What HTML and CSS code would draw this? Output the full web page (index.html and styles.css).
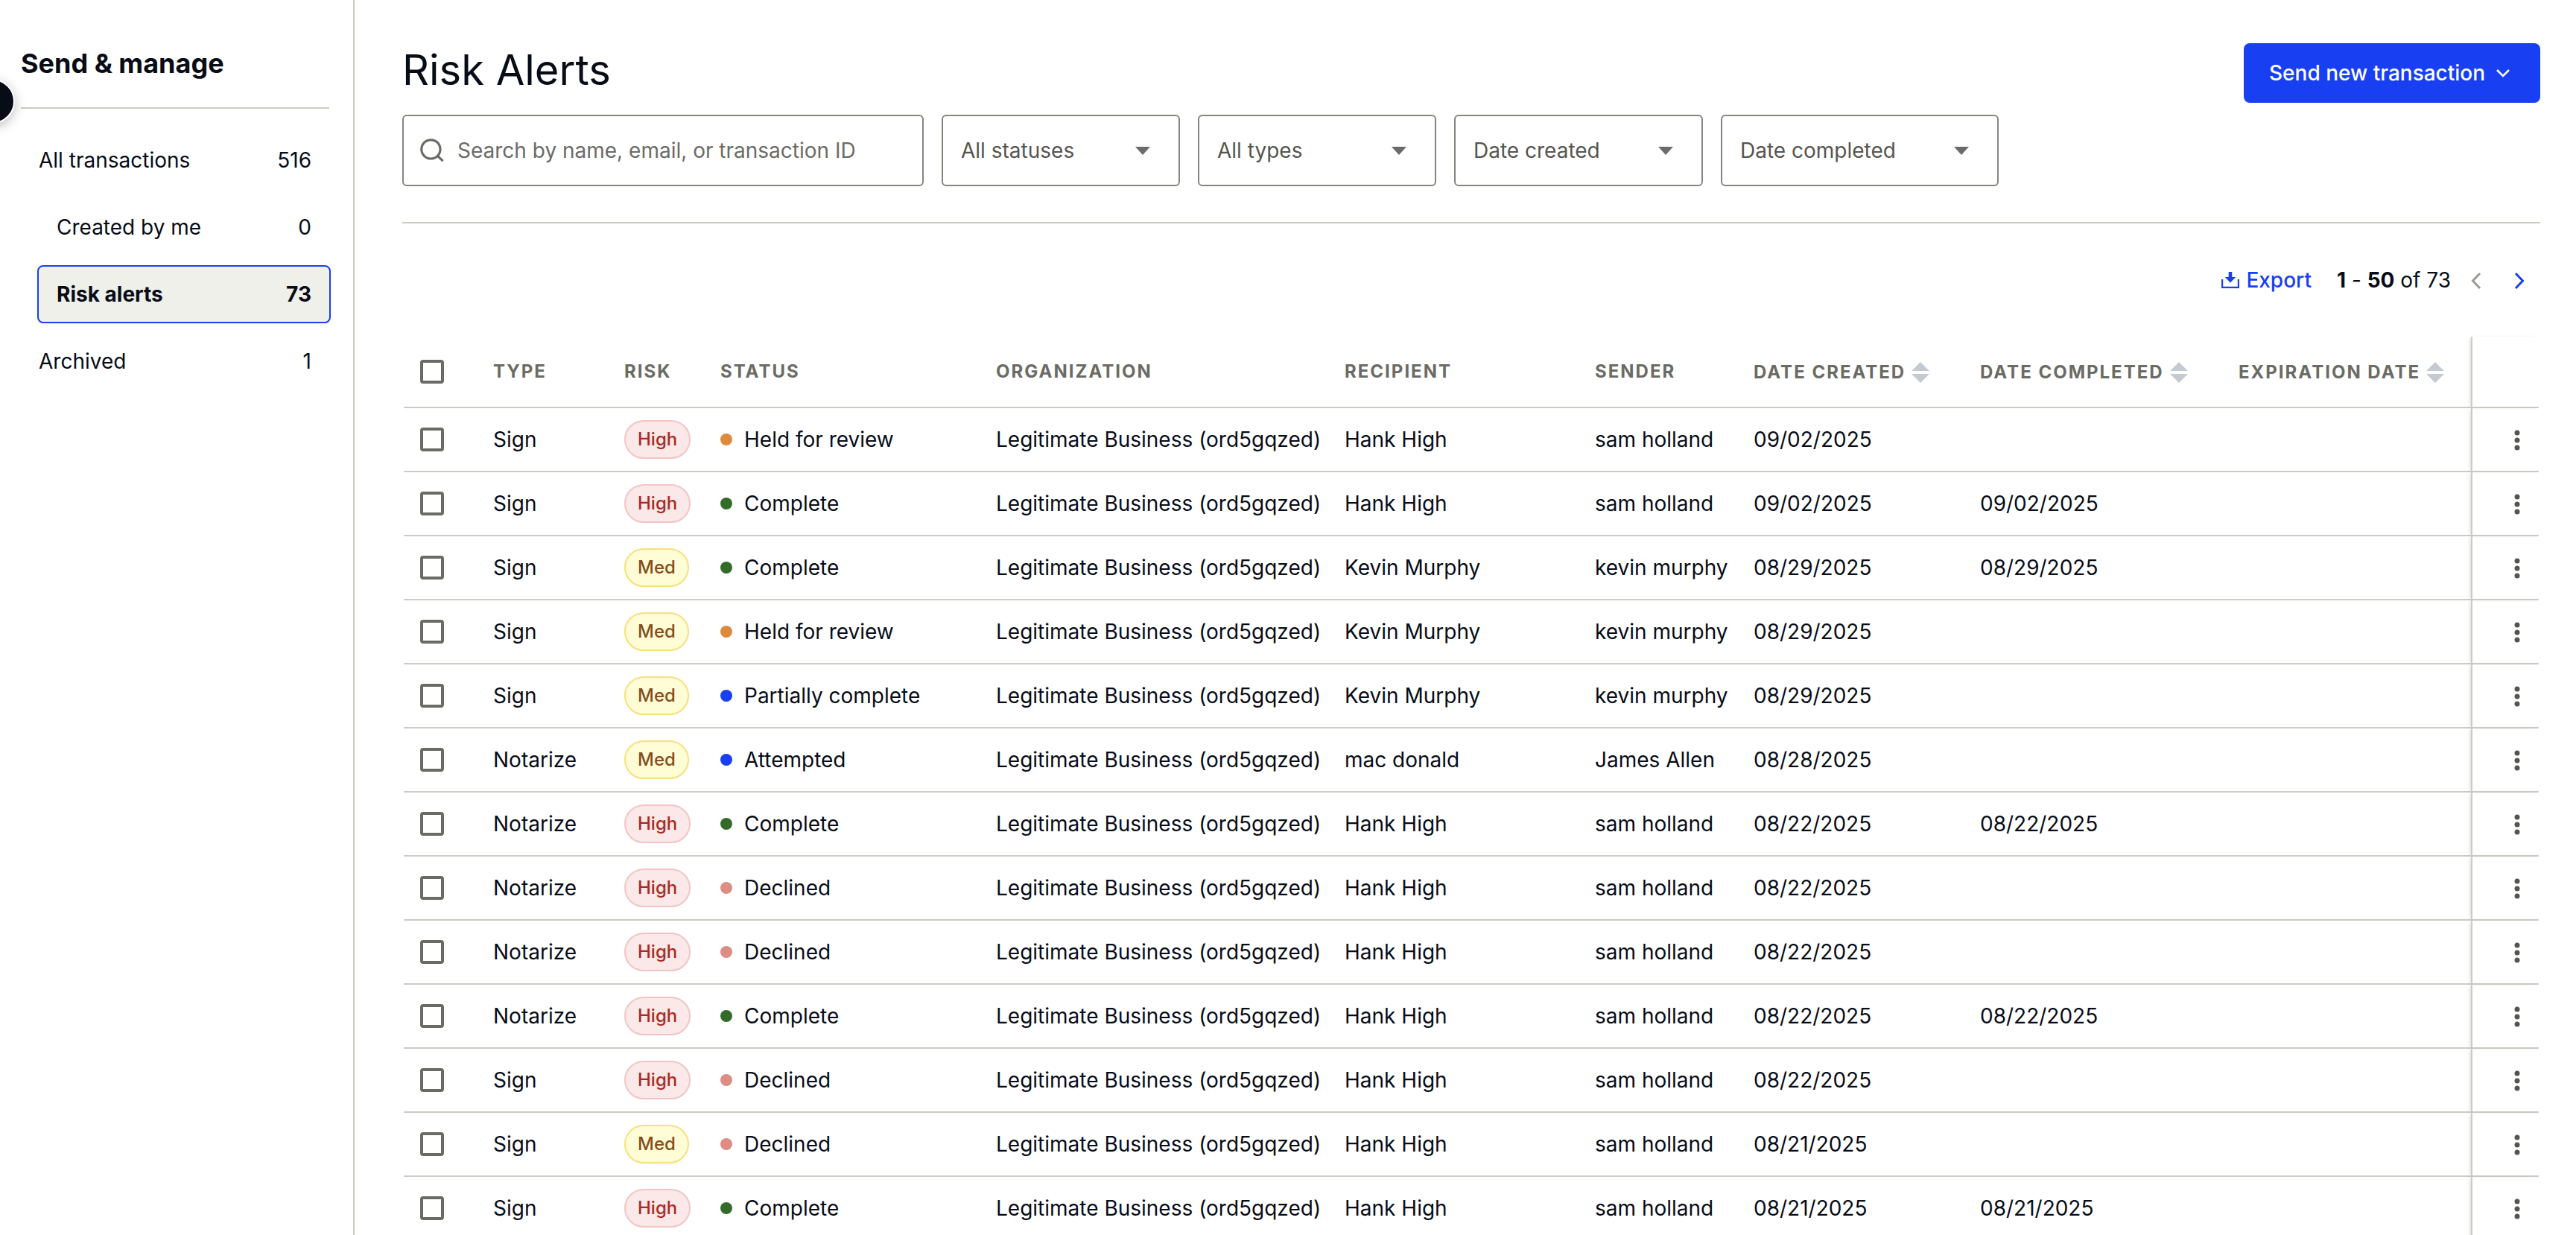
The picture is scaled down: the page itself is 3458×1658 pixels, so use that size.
FILE: index.html
```html
<!DOCTYPE html>
<html lang="en">
<head>
<meta charset="utf-8">
<title>Risk Alerts</title>
<link rel="stylesheet" href="styles.css">
</head>
<body>
<svg class="sprite" width="0" height="0">
  <symbol id="sort" viewBox="0 0 24 28"><path d="M12 0L24 12H0zM0 16H24L12 28z" fill="#c3cad2"/></symbol>
  <symbol id="more" viewBox="0 0 8 28"><g fill="#555550"><circle cx="4" cy="4" r="3.5"/><circle cx="4" cy="14" r="3.5"/><circle cx="4" cy="24" r="3.5"/></g></symbol>
  <symbol id="caret" viewBox="0 0 20 11"><path d="M0 0H20L10 11z" fill="#6b6b6b"/></symbol>
</svg>
<div class="app">
  <aside class="sidebar">
    <span class="collapse"></span>
    <h2 class="side-title">Send &amp; manage</h2>
    <nav class="nav">
      <a class="nav-item"><span>All transactions</span><span>516</span></a>
      <a class="nav-item nested"><span>Created by me</span><span>0</span></a>
      <a class="nav-item nested active"><span>Risk alerts</span><span>73</span></a>
      <a class="nav-item"><span>Archived</span><span>1</span></a>
    </nav>
  </aside>
  <main class="main">
    <header class="head">
      <div>
        <h1 class="title">Risk Alerts</h1>
        <div class="filters">
          <div class="field search">
            <svg width="32" height="32" viewBox="0 0 32 32" fill="none" stroke="#6b6b66" stroke-width="3.2"><circle cx="14.4" cy="14.4" r="12.6"/><path d="M23.2 23.2L30.600 30.200"/></svg>
            <span>Search by name, email, or transaction ID</span>
          </div>
          <div class="field select w-320"><span>All statuses</span><svg width="20" height="11"><use href="#caret"/></svg></div>
          <div class="field select w-320"><span>All types</span><svg width="20" height="11"><use href="#caret"/></svg></div>
          <div class="field select w-334"><span>Date created</span><svg width="20" height="11"><use href="#caret"/></svg></div>
          <div class="field select w-373"><span>Date completed</span><svg width="20" height="11"><use href="#caret"/></svg></div>
        </div>
      </div>
      <button class="send"><span>Send new transaction</span><svg width="18" height="11" viewBox="0 0 18 11" fill="none" stroke="#fff" stroke-width="2.5"><path d="M1 1L9 9L17 1"/></svg></button>
    </header>
    <div class="toolbar">
      <a class="export"><svg width="24" height="22" viewBox="0 0 24 22"><path d="M9.700 0h4.600v7h4.900L12 14.600L4.800 7h4.900z" fill="#1840f2"/><path d="M1.100 10V20.900H22.900V10" fill="none" stroke="#1840f2" stroke-width="2.200"/></svg><span>Export</span></a>
      <span class="range"><b>1</b> - <b>50</b> of 73</span>
      <svg class="prev" width="14" height="22" viewBox="0 0 14 22" fill="none" stroke="#9b9b95" stroke-width="3"><path d="M12 1L2.500 11L12 21"/></svg>
      <svg class="next" width="14" height="22" viewBox="0 0 14 22" fill="none" stroke="#1840f2" stroke-width="3"><path d="M2 1L11.500 11L2 21"/></svg>
    </div>
    <table class="grid">
      <colgroup><col class="c-check"><col class="c-type"><col class="c-risk"><col class="c-status"><col class="c-org"><col class="c-rec"><col class="c-send"><col class="c-created"><col class="c-done"><col class="c-exp"><col class="c-act"></colgroup>
      <thead><tr><th class="check"><i class="box"></i></th><th>Type</th><th>Risk</th><th>Status</th><th>Organization</th><th>Recipient</th><th>Sender</th>
        <th><span class="sortable">Date created<svg width="24" height="28"><use href="#sort"/></svg></span></th>
        <th><span class="sortable">Date completed<svg width="24" height="28"><use href="#sort"/></svg></span></th>
        <th><span class="sortable">Expiration date<svg width="24" height="28"><use href="#sort"/></svg></span></th><th class="act"></th></tr></thead>
      <tbody>
        <tr><td class="check"><i class="box"></i></td><td>Sign</td><td><span class="badge high">High</span></td><td><span class="status held">Held for review</span></td><td>Legitimate Business (ord5gqzed)</td><td>Hank High</td><td>sam holland</td><td>09/02/2025</td><td></td><td></td><td class="act"><svg width="8" height="28"><use href="#more"/></svg></td></tr>
        <tr><td class="check"><i class="box"></i></td><td>Sign</td><td><span class="badge high">High</span></td><td><span class="status complete">Complete</span></td><td>Legitimate Business (ord5gqzed)</td><td>Hank High</td><td>sam holland</td><td>09/02/2025</td><td>09/02/2025</td><td></td><td class="act"><svg width="8" height="28"><use href="#more"/></svg></td></tr>
        <tr><td class="check"><i class="box"></i></td><td>Sign</td><td><span class="badge med">Med</span></td><td><span class="status complete">Complete</span></td><td>Legitimate Business (ord5gqzed)</td><td>Kevin Murphy</td><td>kevin murphy</td><td>08/29/2025</td><td>08/29/2025</td><td></td><td class="act"><svg width="8" height="28"><use href="#more"/></svg></td></tr>
        <tr><td class="check"><i class="box"></i></td><td>Sign</td><td><span class="badge med">Med</span></td><td><span class="status held">Held for review</span></td><td>Legitimate Business (ord5gqzed)</td><td>Kevin Murphy</td><td>kevin murphy</td><td>08/29/2025</td><td></td><td></td><td class="act"><svg width="8" height="28"><use href="#more"/></svg></td></tr>
        <tr><td class="check"><i class="box"></i></td><td>Sign</td><td><span class="badge med">Med</span></td><td><span class="status open">Partially complete</span></td><td>Legitimate Business (ord5gqzed)</td><td>Kevin Murphy</td><td>kevin murphy</td><td>08/29/2025</td><td></td><td></td><td class="act"><svg width="8" height="28"><use href="#more"/></svg></td></tr>
        <tr><td class="check"><i class="box"></i></td><td>Notarize</td><td><span class="badge med">Med</span></td><td><span class="status open">Attempted</span></td><td>Legitimate Business (ord5gqzed)</td><td>mac donald</td><td>James Allen</td><td>08/28/2025</td><td></td><td></td><td class="act"><svg width="8" height="28"><use href="#more"/></svg></td></tr>
        <tr><td class="check"><i class="box"></i></td><td>Notarize</td><td><span class="badge high">High</span></td><td><span class="status complete">Complete</span></td><td>Legitimate Business (ord5gqzed)</td><td>Hank High</td><td>sam holland</td><td>08/22/2025</td><td>08/22/2025</td><td></td><td class="act"><svg width="8" height="28"><use href="#more"/></svg></td></tr>
        <tr><td class="check"><i class="box"></i></td><td>Notarize</td><td><span class="badge high">High</span></td><td><span class="status declined">Declined</span></td><td>Legitimate Business (ord5gqzed)</td><td>Hank High</td><td>sam holland</td><td>08/22/2025</td><td></td><td></td><td class="act"><svg width="8" height="28"><use href="#more"/></svg></td></tr>
        <tr><td class="check"><i class="box"></i></td><td>Notarize</td><td><span class="badge high">High</span></td><td><span class="status declined">Declined</span></td><td>Legitimate Business (ord5gqzed)</td><td>Hank High</td><td>sam holland</td><td>08/22/2025</td><td></td><td></td><td class="act"><svg width="8" height="28"><use href="#more"/></svg></td></tr>
        <tr><td class="check"><i class="box"></i></td><td>Notarize</td><td><span class="badge high">High</span></td><td><span class="status complete">Complete</span></td><td>Legitimate Business (ord5gqzed)</td><td>Hank High</td><td>sam holland</td><td>08/22/2025</td><td>08/22/2025</td><td></td><td class="act"><svg width="8" height="28"><use href="#more"/></svg></td></tr>
        <tr><td class="check"><i class="box"></i></td><td>Sign</td><td><span class="badge high">High</span></td><td><span class="status declined">Declined</span></td><td>Legitimate Business (ord5gqzed)</td><td>Hank High</td><td>sam holland</td><td>08/22/2025</td><td></td><td></td><td class="act"><svg width="8" height="28"><use href="#more"/></svg></td></tr>
        <tr><td class="check"><i class="box"></i></td><td>Sign</td><td><span class="badge med">Med</span></td><td><span class="status declined">Declined</span></td><td>Legitimate Business (ord5gqzed)</td><td>Hank High</td><td>sam holland</td><td>08/21/2025</td><td></td><td></td><td class="act"><svg width="8" height="28"><use href="#more"/></svg></td></tr>
        <tr><td class="check"><i class="box"></i></td><td>Sign</td><td><span class="badge high">High</span></td><td><span class="status complete">Complete</span></td><td>Legitimate Business (ord5gqzed)</td><td>Hank High</td><td>sam holland</td><td>08/21/2025</td><td>08/21/2025</td><td></td><td class="act"><svg width="8" height="28"><use href="#more"/></svg></td></tr>
      </tbody>
    </table>
  </main>
</div>
</body>
</html>
```
FILE: styles.css
```css
* { box-sizing: border-box; }
html, body { margin: 0; height: 100%; overflow: hidden; }
body {
  background: #fff;
  color: #080c17;
  font: 400 28px/44px Inter, "Liberation Sans", sans-serif;
}
svg { display: block; flex: none; }
.sprite { position: absolute; }
.app { display: flex; height: 1658px; }

.sidebar {
  position: relative;
  flex: none;
  width: 476px;
  border-right: 2px solid #cbccc5;
  padding: 60px 32px 0 28px;
}
.collapse {
  position: absolute;
  left: -40px;
  top: 106px;
  width: 60px;
  height: 60px;
  border: 2px solid #fff;
  border-radius: 50%;
  background: #080c17;
  box-shadow: 0 4px 16px rgba(0, 0, 0, .25);
}
.side-title {
  margin: 0;
  height: 86px;
  border-bottom: 2px solid #cbccc5;
  font-size: 36px;
  line-height: 50px;
  font-weight: 700;
}
.nav {
  display: flex;
  flex-direction: column;
  gap: 12px;
  padding-top: 30px;
  margin: 0 -2px 0 22px;
}
.nav-item {
  display: flex;
  justify-content: space-between;
  align-items: center;
  height: 78px;
  padding: 0 24px 0 0;
  border: 2px solid transparent;
  border-radius: 8px;
}
.nested { padding-left: 24px; }
.active { background: #eff0ea; border-color: #1840f2; font-weight: 700; }

.main { flex: 1; min-width: 0; padding: 58px 48px 0 64px; }
.head {
  display: flex;
  justify-content: space-between;
  align-items: flex-start;
  height: 242px;
  border-bottom: 2px solid #cbccc5;
}
.title { margin: 0; font-size: 56px; line-height: 72px; font-weight: 400; height: 96px; }
.filters { display: flex; gap: 24px; }
.field {
  display: flex;
  align-items: center;
  height: 96px;
  border: 2px solid #85867e;
  border-radius: 6px;
  color: #555550;
}
.search { width: 700px; padding-left: 22px; gap: 18px; color: #6b6b66; }
.select { justify-content: space-between; padding: 0 38px 0 24px; }
.w-320 { width: 320px; }
.w-334 { width: 334px; }
.w-373 { width: 373px; }
.send {
  display: flex;
  align-items: center;
  gap: 15px;
  width: 398px;
  height: 80px;
  padding: 0 0 0 34px;
  border: 0;
  border-radius: 8px;
  background: #1840f2;
  color: #fff;
  font: 500 28px/44px Inter, "Liberation Sans", sans-serif;
}
.toolbar {
  display: flex;
  justify-content: flex-end;
  align-items: center;
  height: 152px;
  padding: 0 21px 0 0;
}
.export { display: flex; align-items: center; gap: 9px; color: #1840f2; font-weight: 500; margin-right: 34px; }
.range { margin-right: 27px; }
.prev { margin-right: 44px; }
.prev, .next { margin-top: 2px; }

.grid {
  table-layout: fixed;
  border-collapse: separate;
  border-spacing: 0;
  width: 2866px;
  margin-left: 2px;
}
.c-check { width: 120px; }
.c-type { width: 176px; }
.c-risk { width: 129px; }
.c-status { width: 370px; }
.c-org { width: 468px; }
.c-rec { width: 336px; }
.c-send { width: 213px; }
.c-created { width: 304px; }
.c-done { width: 347px; }
.c-exp { width: 312px; }
.c-act { width: 91px; }
.grid th, .grid td {
  padding: 0;
  text-align: left;
  vertical-align: middle;
  white-space: nowrap;
  border-bottom: 2px solid #cbccc5;
}
.grid th {
  height: 96px;
  color: #6b6b64;
  font-size: 24px;
  line-height: 32px;
  font-weight: 700;
  letter-spacing: 2px;
  text-transform: uppercase;
}
.grid td { height: 86px; }
.grid .check { padding-left: 22px; }
.grid .act {
  border-left: 2px solid #cbccc5;
  padding: 2px 0 0 56px;
  box-shadow: -3px 0 4px -2px rgba(100, 100, 80, .25);
}
.box {
  display: block;
  width: 32px;
  height: 32px;
  border: 4px solid #6b6b66;
  border-radius: 4px;
}
.sortable { display: flex; align-items: center; gap: 8px; padding-top: 1px; }
.badge {
  display: block;
  width: max-content;
  height: 52px;
  padding: 0 16px;
  border: 2px solid;
  border-radius: 26px;
  font-size: 24px;
  line-height: 47px;
  font-weight: 500;
}
.high { background: #fbe8e8; border-color: #f4c4c4; color: #a92b1f; }
.med { background: #fffdd5; border-color: #f9df7c; color: #854d1b; }
.status { display: flex; align-items: center; gap: 16px; }
.status::before { content: ""; width: 16px; height: 16px; border-radius: 50%; background: currentColor; }
.held::before { background: #dc8a3e; }
.complete::before { background: #356b2a; }
.open::before { background: #1840f2; }
.declined::before { background: #dd8d84; }
```
